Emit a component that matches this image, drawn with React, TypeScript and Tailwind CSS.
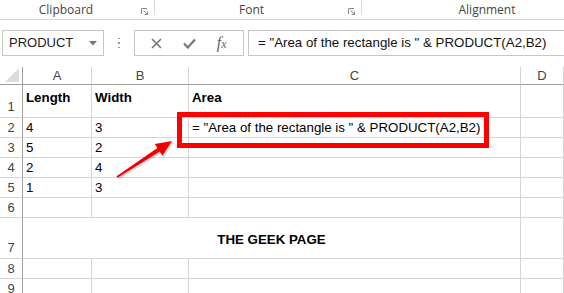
import React from 'react';

const cols = ['A', 'B', 'C', 'D'];

const rows: { n: number; h: string; cells: string[]; bold?: boolean }[] = [
  { n: 1, h: 'h-[33px]', cells: ['Length', 'Width', 'Area', ''], bold: true },
  { n: 2, h: 'h-[20px]', cells: ['4', '3', '= "Area of the rectangle is " & PRODUCT(A2,B2)', ''] },
  { n: 3, h: 'h-[20px]', cells: ['5', '2', '', ''] },
  { n: 4, h: 'h-[20px]', cells: ['2', '4', '', ''] },
  { n: 5, h: 'h-[20px]', cells: ['1', '3', '', ''] },
  { n: 6, h: 'h-[20px]', cells: ['', '', '', ''] },
];

function Launcher() {
  return (
    <svg width="7" height="7" viewBox="0 0 7 7" className="mr-[6px] mt-[3px]">
      <path d="M0.5 6V0.5H6" fill="none" stroke="#8a8a8a" strokeWidth="1" />
      <path d="M2.5 2.5L6.5 6.5M6.5 3.5V6.5H3.5" fill="none" stroke="#8a8a8a" strokeWidth="1" />
    </svg>
  );
}

function RowHead({ n, h, bottom }: { n: number; h: string; bottom?: boolean }) {
  return (
    <div
      className={`${h} flex ${bottom ? 'items-end pb-[1px]' : 'items-center'} justify-center border-r border-r-[#9e9e9e] border-b border-b-[#d4d4d4] text-[13px] text-[#444]`}
    >
      {n}
    </div>
  );
}

export default function App() {
  return (
    <div className="relative w-[564px] h-[293px] overflow-hidden bg-white font-['Liberation_Sans',sans-serif]">
      {/* ribbon group labels */}
      <div className="flex h-[20px] border-b border-[#d5d5d5] text-[12px] text-[#444] font-['Open_Sans',sans-serif]">
        <div className="w-[154px] flex items-center pt-[1px]">
          <span className="flex-1 text-center pr-[9px]">Clipboard</span>
          <Launcher />
        </div>
        <div className="w-px h-[15px] bg-[#dadada]" />
        <div className="w-[206px] flex items-center pt-[1px]">
          <span className="flex-1 text-center">Font</span>
          <Launcher />
        </div>
        <div className="w-px h-[15px] bg-[#dadada]" />
        <div className="flex-1 flex items-center pt-[1px]">
          <span className="flex-1 text-center pl-[48px]">Alignment</span>
        </div>
      </div>

      {/* formula bar */}
      <div className="flex h-[26px] mt-[10px] items-stretch">
        <div className="ml-[2px] w-[102px] border border-[#c6c6c6] flex items-center pl-[6px] pr-[6px] text-[13px] text-[#222]">
          <span className="flex-1">PRODUCT</span>
          <svg width="8" height="5" viewBox="0 0 8 5">
            <path d="M0 0H8L4 4.5Z" fill="#777" />
          </svg>
        </div>
        <div className="w-[30px] flex flex-col items-center justify-center gap-[3px]">
          <span className="w-[1.5px] h-[1.5px] bg-[#999]" />
          <span className="w-[1.5px] h-[1.5px] bg-[#999]" />
          <span className="w-[1.5px] h-[1.5px] bg-[#999]" />
        </div>
        <div className="w-[110px] border border-[#c6c6c6] flex items-center justify-around px-[6px]">
          <svg width="11" height="11" viewBox="0 0 11 11">
            <path d="M1 1L10 10M10 1L1 10" stroke="#777" strokeWidth="1.6" />
          </svg>
          <svg width="13" height="11" viewBox="0 0 13 11">
            <path d="M1 5.5L4.8 9.5L12 1.5" fill="none" stroke="#777" strokeWidth="2.2" />
          </svg>
          <span className="text-[16px] leading-none italic text-[#666] font-['Liberation_Serif',serif]">
            f<span className="text-[12px]">x</span>
          </span>
        </div>
        <div className="ml-[4px] flex-1 border-y border-l border-[#c6c6c6] flex items-center pl-[9px] text-[13.3px] text-[#111] whitespace-nowrap">
          = "Area of the rectangle is " &amp; PRODUCT(A2,B2)
        </div>
      </div>

      {/* sheet */}
      <div className="mt-[11px] grid grid-cols-[23px_69px_97px_332px_1fr] text-[13.3px] text-black">
        <div className="h-[18px] border-r border-r-[#9e9e9e] border-b border-b-[#9e9e9e] relative">
          <svg width="14" height="14" viewBox="0 0 14 14" className="absolute right-[3px] bottom-[2px]">
            <path d="M14 0V14H0Z" fill="#dcdcdc" />
          </svg>
        </div>
        {cols.map((c) => (
          <div
            key={c}
            className="h-[18px] flex items-center justify-center border-r border-r-[#d4d4d4] border-b border-b-[#9e9e9e] text-[13px] text-[#444]"
          >
            {c}
          </div>
        ))}

        {rows.map((r) => (
          <React.Fragment key={r.n}>
            <RowHead n={r.n} h={r.h} bottom={r.n === 1} />
            {r.cells.map((v, i) => (
              <div
                key={i}
                className={`${r.h} flex ${r.bold ? 'items-start pt-[3px] font-bold' : 'items-center'} pl-[3px] border-r border-b border-[#d4d4d4] whitespace-nowrap`}
              >
                {v}
              </div>
            ))}
          </React.Fragment>
        ))}

        <RowHead n={7} h="h-[41px]" bottom />
        <div className="col-span-3 h-[41px] flex items-center justify-center border-r border-b border-[#d4d4d4] font-bold pt-[3px]">
          THE GEEK PAGE
        </div>
        <div className="h-[41px] border-r border-b border-[#d4d4d4]" />

        {[8, 9].map((n) => (
          <React.Fragment key={n}>
            <RowHead n={n} h="h-[20px]" />
            {cols.map((c) => (
              <div key={c} className="h-[20px] border-r border-b border-[#d4d4d4]" />
            ))}
          </React.Fragment>
        ))}
      </div>

      {/* annotation */}
      <div className="absolute left-[177px] top-[112px] w-[312px] h-[36px] border-[5px] border-[#ff0000]" />
      <svg className="absolute left-0 top-0" width="564" height="293" viewBox="0 0 564 293">
        <polygon
          points="173.5,142.5 156.3,145.4 158.9,149.5 118,177.7 119,179.3 161.3,153.1 163.9,157.2"
          fill="#000"
          opacity="0.18"
        />
        <polygon
          points="172,141 154.8,143.9 157.4,148 116.5,176.2 117.5,177.8 159.8,151.6 162.4,155.7"
          fill="#ee0000"
        />
      </svg>
    </div>
  );
}
